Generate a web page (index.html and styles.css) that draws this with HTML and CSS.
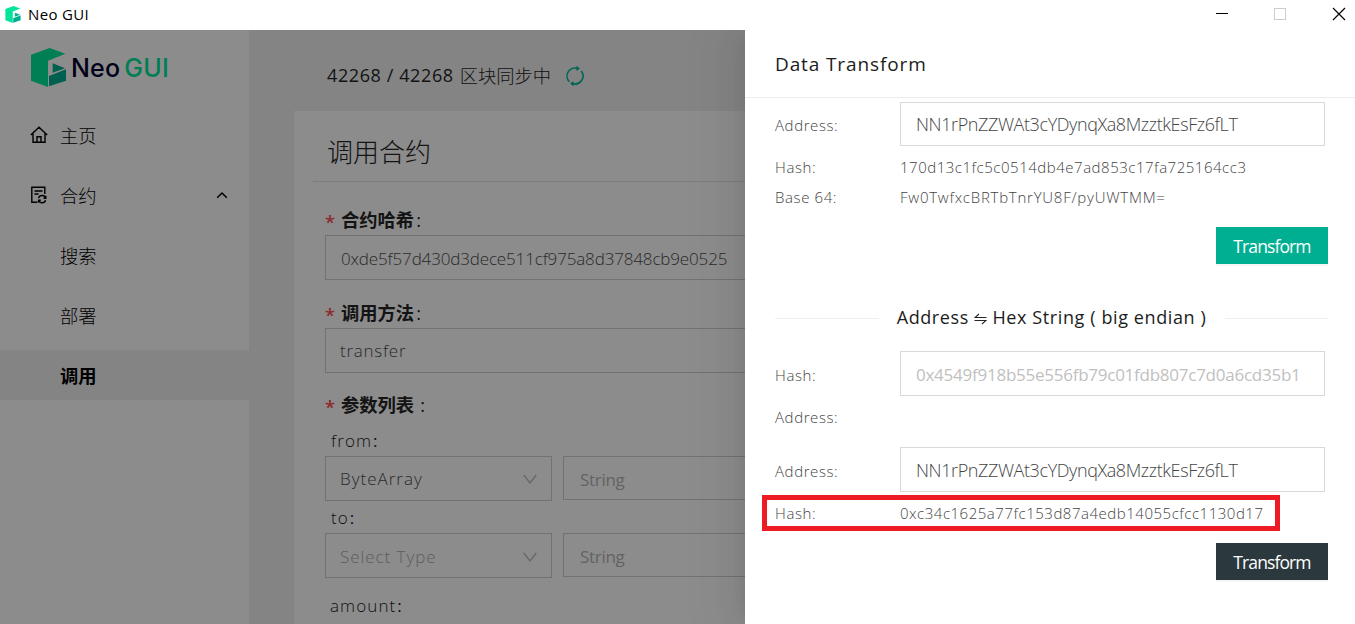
FILE: index.html
```html
<!DOCTYPE html>
<html lang="zh-CN">
<head>
<meta charset="utf-8">
<title>Neo GUI</title>
<link rel="stylesheet" href="styles.css">
</head>
<body>
<header class="titlebar">
  <svg class="app-icon" viewBox="0 0 105 117"><path fill="#00e599" d="M0 20 56 0 103 17 51 38V117L0 98Z"/><path fill="#00af92" d="M65 46 102 61 65 74ZM54 84 105 64V98L54 115Z"/></svg>
  <span class="app-name">Neo GUI</span>
  <svg class="win-controls" viewBox="0 0 140 30" shape-rendering="crispEdges"><path d="M1 13.500H13" stroke="#000"/><rect x="59.500" y="8.500" width="11" height="11" fill="none" stroke="#ccc"/><path d="M118 8 130 20M130 8 118 20" stroke="#000" shape-rendering="auto" stroke-width="1.200"/></svg>
</header>
<div class="app">
  <aside class="sidebar">
    <div class="brand">
      <svg class="brand-icon" viewBox="0 0 105 117"><path fill="#00e599" d="M0 20 56 0 103 17 51 38V117L0 98Z"/><path fill="#00af92" d="M65 46 102 61 65 74ZM54 84 105 64V98L54 115Z"/></svg>
      <span class="brand-neo">Neo</span><span class="brand-gui">GUI</span>
    </div>
    <nav class="menu">
      <div class="menu-item"><svg class="menu-icon" viewBox="0 0 18 18"><path d="M.8 9 9 1.200 17.200 9M3 7.500V16.200H15V7.500M7 16V10.800H11V16"/></svg><span>主页</span></div>
      <div class="menu-item"><svg class="menu-icon" viewBox="0 0 18 18"><path d="M7.500 16.300H1.800V1.300H14.800V8M4.500 5H12.500M4.500 8H8.500M8.600 12.200A3.600 3.600 0 0 1 15.600 12.200M15.800 9.800V12.200H13.500M15.600 14.200A3.600 3.600 0 0 1 8.800 14.400M8.600 16.600V14.200H10.800"/></svg><span>合约</span><svg class="menu-caret" viewBox="0 0 12 8"><path d="M1.200 6.800 6 2 10.800 6.800"/></svg></div>
      <div class="menu-item sub"><span>搜索</span></div>
      <div class="menu-item sub"><span>部署</span></div>
      <div class="menu-item sub active"><span>调用</span></div>
    </nav>
  </aside>
  <main class="content">
    <div class="sync"><span class="sync-count">42268 / 42268</span><span class="sync-text">区块同步中</span>
      <svg class="sync-icon" viewBox="0 0 20 20"><path d="M4.400 15.700A8 8 0 0 1 12.500 2.400M16.200 5A8 8 0 0 1 7.500 17.600M2.500 13.300A8 8 0 0 0 3.100 14.200"/><path d="M11.500 -.2 14.900 2.600 11.500 5ZM8.500 15 5.100 17.400 8.500 20.200Z" class="solid"/></svg>
    </div>
    <section class="card">
      <h1 class="card-title">调用合约</h1>
      <div class="form">
        <div class="label first"><i>*</i><b>合约哈希</b><span>:</span></div>
        <div class="field value-hash">0xde5f57d430d3dece511cf975a8d37848cb9e0525</div>
        <div class="label"><i>*</i><b>调用方法</b><span>:</span></div>
        <div class="field spaced method">transfer</div>
        <div class="label params"><i>*</i><b>参数列表</b><span class="far">:</span></div>
        <div class="param-name from">from<span>:</span></div>
        <div class="param-row">
          <div class="field select spaced">ByteArray<svg class="arrow" viewBox="0 0 14 10"><path d="M.8 1 7 9 13.200 1"/></svg></div>
          <div class="field string">String</div>
        </div>
        <div class="param-name">to<span>:</span></div>
        <div class="param-row">
          <div class="field select placeholder">Select Type<svg class="arrow" viewBox="0 0 14 10"><path d="M.8 1 7 9 13.200 1"/></svg></div>
          <div class="field string">String</div>
        </div>
        <div class="param-name amount">amount<span>:</span></div>
      </div>
    </section>
  </main>
  <div class="mask"></div>
  <aside class="drawer">
    <h2 class="drawer-title">Data Transform</h2>
    <div class="drawer-body">
      <div class="row input-row first-input"><span class="key">Address:</span><div class="box address">NN1rPnZZWAt3cYDynqXa8MzztkEsFz6fLT</div></div>
      <div class="row result"><span class="key">Hash:</span><span class="hash">170d13c1fc5c0514db4e7ad853c17fa725164cc3</span></div>
      <div class="row result"><span class="key">Base 64:</span><span class="base64">Fw0TwfxcBRTbTnrYU8F/pyUWTMM=</span></div>
      <button class="btn primary">Transform</button>
      <div class="divider"><span class="divider-text">Address <svg class="swap" viewBox="0 0 13 12"><path d="M12.500 4.500H1L5 1M.5 7.500H12L8 11"/></svg> Hex String ( big endian )</span></div>
      <div class="row input-row"><span class="key">Hash:</span><div class="box hint">0x4549f918b55e556fb79c01fdb807c7d0a6cd35b1</div></div>
      <div class="row result empty"><span class="key">Address:</span></div>
      <div class="row input-row"><span class="key">Address:</span><div class="box address">NN1rPnZZWAt3cYDynqXa8MzztkEsFz6fLT</div></div>
      <div class="row marked"><span class="key">Hash:</span><span class="hash">0xc34c1625a77fc153d87a4edb14055cfcc1130d17</span></div>
      <button class="btn dark">Transform</button>
    </div>
  </aside>
</div>
</body>
</html>
```
FILE: styles.css
```css
* { box-sizing: border-box; }
body { margin: 0; width: 1355px; height: 624px; overflow: hidden; background: #fff; font-family: "Open Sans", "Noto Sans CJK SC", sans-serif; font-weight: 300; white-space: nowrap; }
svg { flex: none; }
.titlebar { display: flex; align-items: center; height: 30px; padding-left: 5px; }
.app-icon { width: 16px; height: 17px; margin-bottom: 2px; }
.app-name { margin-left: 7px; font-size: 15px; font-weight: 400; line-height: 28px; height: 30px; color: #000; letter-spacing: .35px; }
.win-controls { width: 140px; height: 30px; margin-left: auto; }
.app { position: relative; display: flex; height: 594px; background: #f0f0f0; overflow: hidden; }

.sidebar { width: 250px; background: #fff; border-right: 1px solid #f0f0f0; }
.brand { display: flex; align-items: center; height: 76px; padding: 0 0 2px 31px; font-family: Inter, sans-serif; font-size: 25px; font-weight: 500; }
.brand span { padding-top: 1px; }
.brand-icon { width: 35px; height: 39px; }
.brand-neo { margin-left: 5px; color: #00002f; letter-spacing: .2px; }
.brand-gui { margin-left: 4px; color: #00e599; font-weight: 500; letter-spacing: .2px; }
.menu { padding-top: 4px; }
.menu-item { display: flex; align-items: center; height: 50px; margin-bottom: 10px; padding: 0 21px 0 30px; color: #000; font-size: 18.300px; }
.menu-item span { padding-bottom: 1px; }
.menu-icon { width: 18px; height: 18px; margin-right: 12px; fill: none; stroke: #000; stroke-width: 1.400; }
.menu-caret { width: 12px; height: 8px; margin-left: auto; fill: none; stroke: #000; stroke-width: 1.500; }
.menu-item.sub { padding-left: 60px; }
.active { background: #f0f0f0; font-weight: 700; }

.content { flex: 1; padding-left: 44px; }
.sync { display: flex; align-items: center; height: 81px; padding: 10px 0 0 33px; font-size: 18.300px; color: #262626; }
.sync-count { font-weight: 500; font-size: 18px; letter-spacing: .6px; padding-bottom: 1px; }
.sync-text { margin-left: 6px; padding-bottom: 1px; }
.sync-icon { width: 20px; height: 20px; margin-left: 14px; fill: none; stroke: #00b893; stroke-width: 1.600; overflow: visible; }
.sync-icon .solid { fill: #00b893; stroke: none; }
.card { height: 520px; background: #fff; }
.card-title { margin: 0 0 0 19px; height: 71px; padding: 12px 0 0 14px; font-size: 26px; line-height: 58px; font-weight: 300; color: #262626; border-bottom: 1px solid #e4e4e4; }
.form { padding-left: 31px; }
.label { display: flex; align-items: center; height: 48px; padding-top: 16px; color: #262626; font-size: 18.300px; }
.label.first { height: 53px; padding-top: 21px; }
.label i { width: 16px; color: #ff4d4f; font-style: normal; font-weight: 600; padding-top: 4px; }
.label b { font-weight: 700; }
.label span { margin-left: 2px; font-weight: 400; }
.label .far { margin-left: 6px; }
.label.params { padding-top: 14px; }
.field { display: flex; align-items: center; height: 45px; padding-left: 15px; border: 1px solid #d0d0d0; color: #4d4d4d; font-size: 17px; }
.value-hash { letter-spacing: -.15px; padding-top: 1px; }
.spaced { padding-left: 14px; letter-spacing: 1px; }
.method { letter-spacing: .75px; }
.param-name { display: flex; align-items: center; height: 32px; padding-left: 6px; font-size: 17px; letter-spacing: 1.100px; color: #1a1a1a; }
.param-name span { margin-left: 1px; font-weight: 400; }
.param-name.from { height: 35px; padding-top: 3px; }
.param-row { display: flex; gap: 11px; }
.select { width: 227px; justify-content: space-between; padding-right: 14px; }
.placeholder { padding-left: 14px; padding-top: 2px; letter-spacing: .95px; color: #aaa; }
.string { flex: 1; height: 44px; font-weight: 400; color: #b5b5b5; padding-left: 16px; padding-top: 3px; letter-spacing: -.3px; }
.arrow { width: 14px; height: 10px; fill: none; stroke: #bfbfbf; stroke-width: 1.400; }
.param-name.amount { padding-left: 5px; padding-bottom: 2px; height: 56px; }

.mask { position: absolute; inset: 0; background: rgba(0, 0, 0, .45); }
.drawer { position: absolute; top: 0; right: 0; bottom: 0; width: 610px; background: #fff; box-shadow: -6px 0 16px -8px rgba(0,0,0,.08), -9px 0 28px rgba(0,0,0,.05), -12px 0 48px 16px rgba(0,0,0,.03); }
.drawer-title { margin: 0; height: 68px; padding-left: 30px; border-bottom: 1px solid #ededed; font-size: 19px; font-weight: 500; line-height: 69px; color: #1c1c1c; letter-spacing: .88px; }
.drawer-body { display: flex; flex-direction: column; padding: 4px 27px 0 30px; color: #444; }
.row { display: flex; align-items: center; font-size: 15px; letter-spacing: .52px; }
.key { width: 125px; flex: none; letter-spacing: .6px; }
.base64 { letter-spacing: .75px; }
.input-row { height: 45px; padding-right: 3px; }
.input-row .key { padding-top: 2px; }
.first-input { height: 44px; margin-bottom: 7px; }
.box { display: flex; align-items: center; flex: 1; height: 100%; border: 1px solid #d9d9d9; padding: 0 0 0 15px; font-size: 18px; letter-spacing: -.4px; }
.hint { color: #bfbfbf; font-weight: 400; font-size: 17px; letter-spacing: -.25px; padding-top: 1px; }
.result { height: 30px; padding-bottom: 2px; }
.btn { align-self: flex-end; width: 112px; height: 37px; padding: 1px 0 0; border: 0; font: 400 17.500px "Open Sans", sans-serif; letter-spacing: -.9px; color: #fff; box-shadow: 0 2px 0 rgba(0,0,0,.04); }
.primary { margin-top: 14px; background: #00af92; }
.dark { margin-top: 12px; background: #2b383d; }
.divider { display: flex; align-items: center; height: 48px; margin: 30px 0 9px; color: #1c1c1c; font-size: 18px; font-weight: 500; letter-spacing: .6px; }
.divider::before, .divider::after { content: ""; flex: 1; height: 1px; background: #f0f0f0; }
.divider-text { display: flex; align-items: center; justify-content: center; width: 346px; padding-bottom: 2px; white-space: pre; }
.swap { width: 13px; height: 12px; margin-top: 3px; fill: none; stroke: #262626; stroke-width: 1.100; }
.empty { margin: 7px 0 14px; }
.marked { width: 518px; height: 36px; margin: 3px 0 0 -13px; padding-left: 8px; border: 5px solid #ed1c24; }
```
